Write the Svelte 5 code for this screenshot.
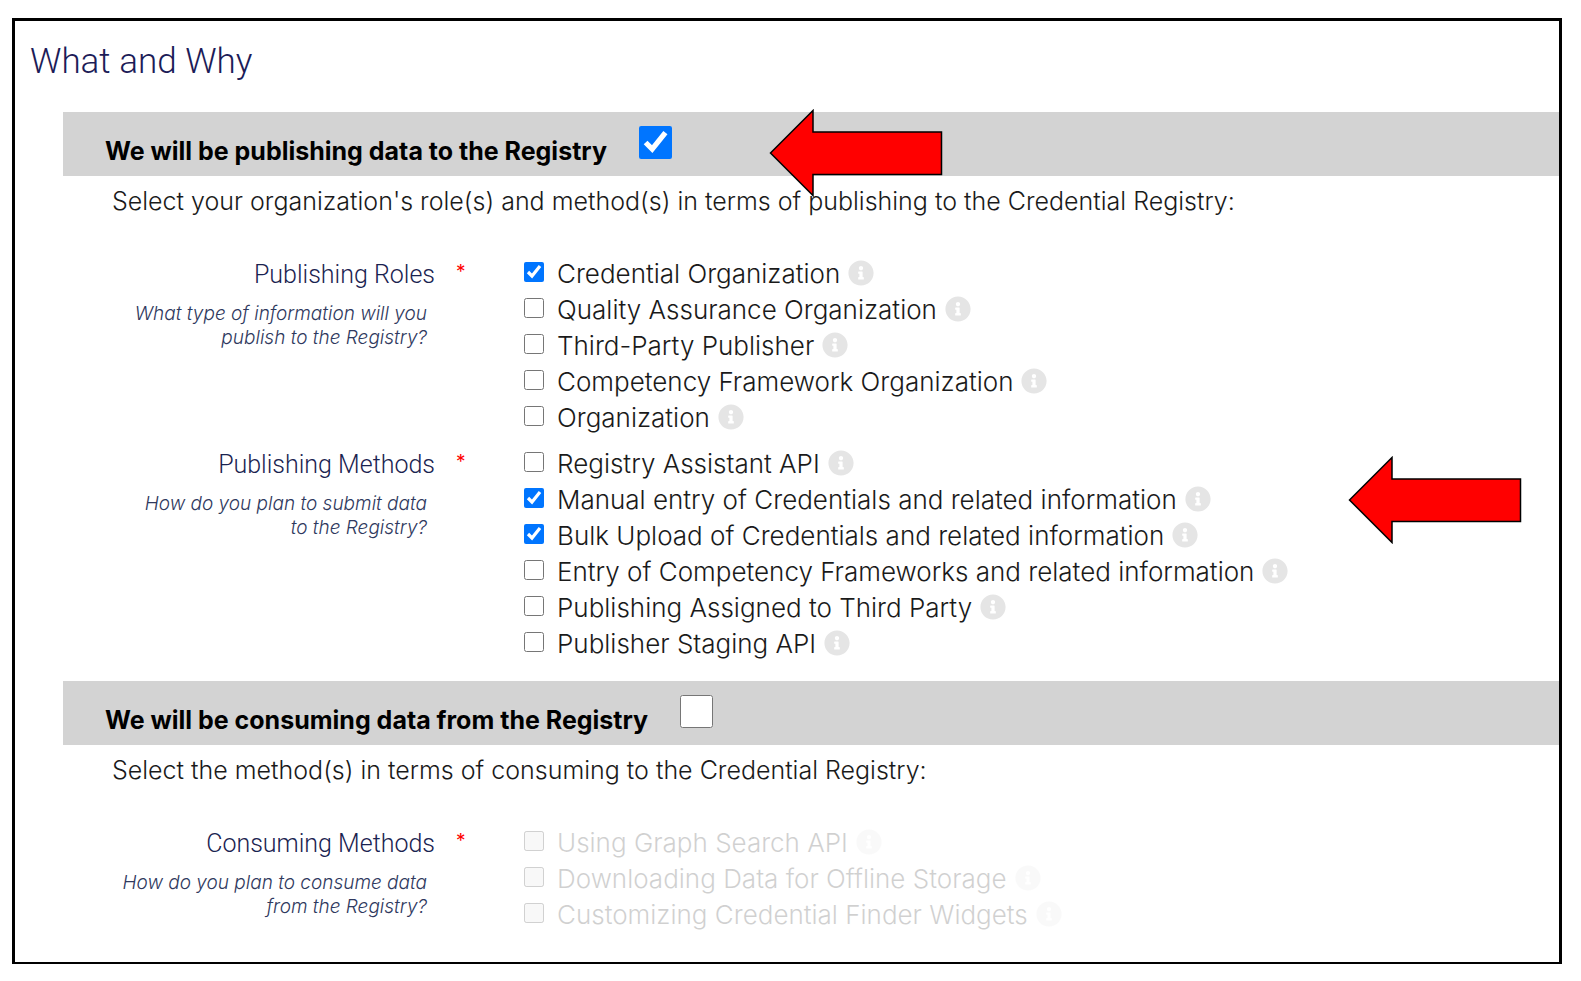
<script>
  let sections = $state([
    {
      id: 'publish',
      title: 'We will be publishing data to the Registry',
      enabled: true,
      intro:
        "Select your organization's role(s) and method(s) in terms of publishing to the Credential Registry:",
      pointer: true,
      groups: [
        {
          id: 'roles',
          label: 'Publishing Roles',
          hint: ['What type of information will you', 'publish to the Registry?'],
          options: [
            { text: 'Credential Organization', checked: true },
            { text: 'Quality Assurance Organization', checked: false },
            { text: 'Third-Party Publisher', checked: false },
            { text: 'Competency Framework Organization', checked: false },
            { text: 'Organization', checked: false }
          ]
        },
        {
          id: 'methods',
          label: 'Publishing Methods',
          hint: ['How do you plan to submit data', 'to the Registry?'],
          pointer: true,
          options: [
            { text: 'Registry Assistant API', checked: false },
            { text: 'Manual entry of Credentials and related information', checked: true },
            { text: 'Bulk Upload of Credentials and related information', checked: true },
            { text: 'Entry of Competency Frameworks and related information', checked: false },
            { text: 'Publishing Assigned to Third Party', checked: false },
            { text: 'Publisher Staging API', checked: false }
          ]
        }
      ]
    },
    {
      id: 'consume',
      title: 'We will be consuming data from the Registry',
      enabled: false,
      intro: 'Select the method(s) in terms of consuming to the Credential Registry:',
      groups: [
        {
          id: 'consuming',
          label: 'Consuming Methods',
          hint: ['How do you plan to consume data', 'from the Registry?'],
          options: [
            { text: 'Using Graph Search API', checked: false },
            { text: 'Downloading Data for Offline Storage', checked: false },
            { text: 'Customizing Credential Finder Widgets', checked: false }
          ]
        }
      ]
    }
  ]);
</script>

{#snippet arrow(place)}
  <svg class="arrow {place}" width="174" height="88" viewBox="0 0 174 88" aria-hidden="true">
    <path d="M1.5 44 44 1.5V23H172.500V65.500H44V86.500Z" fill="#f00" stroke="#000" stroke-width="1.500" />
  </svg>
{/snippet}

{#snippet info()}
  <svg class="info" viewBox="0 0 512 512" aria-hidden="true">
    <path
      fill="currentColor"
      d="M256 8C119 8 8 119.100 8 256c0 137 111 248 248 248s248-111 248-248C504 119.100 393 8 256 8zm0 110c23.200 0 42 18.800 42 42s-18.800 42-42 42-42-18.800-42-42 18.800-42 42-42zm56 254c0 6.600-5.400 12-12 12h-88c-6.600 0-12-5.400-12-12v-24c0-6.600 5.400-12 12-12h12v-64h-12c-6.600 0-12-5.400-12-12v-24c0-6.600 5.400-12 12-12h64c6.600 0 12 5.400 12 12v100h12c6.600 0 12 5.400 12 12v24z"
    />
  </svg>
{/snippet}

<main>
  <h1>What and Why</h1>
  {#each sections as section (section.id)}
    <section>
      <div class="bar">
        <label for={section.id}>{section.title}</label>
        <input id={section.id} type="checkbox" bind:checked={section.enabled} />
        {#if section.pointer}{@render arrow('on-bar')}{/if}
      </div>
      <p class="intro">{section.intro}</p>
      <div class="groups">
        {#each section.groups as group (group.id)}
          <div class="group" role="group" aria-labelledby="{group.id}-label">
            <div class="caption">
              <div class="name" id="{group.id}-label">{group.label}</div>
              <div class="hint">
                {#each group.hint as line}<span>{line}</span>{/each}
              </div>
            </div>
            <span class="required">*</span>
            <ul class:off={!section.enabled}>
              {#each group.options as option, i}
                <li>
                  <input
                    id="{group.id}-{i}"
                    type="checkbox"
                    bind:checked={option.checked}
                    disabled={!section.enabled}
                  />
                  <label for="{group.id}-{i}">{option.text}</label>
                  {@render info()}
                </li>
              {/each}
            </ul>
            {#if group.pointer}{@render arrow('on-group')}{/if}
          </div>
        {/each}
      </div>
    </section>
  {/each}
</main>

<style>
  :global(body) {
    background: #fff;
  }

  main {
    box-sizing: border-box;
    margin: 18px 19px 16px 12px;
    padding-bottom: 10px;
    border: 3px solid #000;
    border-bottom-width: 2px;
    font-family: Inter, sans-serif;
    font-size: 25px;
    line-height: 36px;
    color: #1a1a1a;
  }

  h1 {
    margin: 0;
    padding: 17px 16px 26px 15px;
    font: 300 35px/48px Roboto, sans-serif;
    color: #1c1c58;
  }

  section {
    margin-left: 48px;
  }

  .bar {
    position: relative;
    display: flex;
    box-sizing: border-box;
    height: 64px;
    padding: 14px 0 0 42px;
    gap: 32px;
    background: #d3d3d3;
  }

  .bar label {
    padding-top: 7px;
    font-weight: 700;
    color: #000;
  }

  .bar input {
    width: 33px;
    height: 33px;
    margin: 0;
  }

  .intro {
    margin: 0;
    padding: 7px 0 37px 49px;
    font-weight: 300;
  }

  .groups {
    display: flex;
    flex-direction: column;
    gap: 10px;
    padding-bottom: 19px;
  }

  .group {
    position: relative;
    display: flex;
  }

  .caption {
    width: 372px;
    text-align: right;
    color: #1a2350;
  }

  .name {
    font: 300 25px/38px Roboto, sans-serif;
  }

  .hint {
    padding: 8px 8px 0 0;
    font-size: 19px;
    line-height: 24px;
    font-style: italic;
    font-weight: 300;
    color: #2f395e;
  }

  .hint span {
    display: block;
  }

  .required {
    width: 68px;
    padding-left: 21px;
    font-size: 19px;
    line-height: 32px;
    color: #f00;
    box-sizing: border-box;
  }

  ul {
    margin: 0;
    padding: 0 0 0 21px;
    list-style: none;
    font-size: 26px;
    font-weight: 300;
  }

  li {
    display: flex;
    align-items: center;
    height: 36px;
  }

  li input {
    width: 20px;
    height: 20px;
    margin: 0 13px 4px 0;
  }

  .info {
    width: 26px;
    height: 26px;
    margin: 0 0 2px 8px;
    color: #e5e5e5;
  }

  .off label,
  .off .info {
    opacity: 0.2;
  }

  .arrow {
    position: absolute;
  }

  .on-bar {
    top: -3px;
    left: 706px;
  }

  .on-group {
    top: 10px;
    right: 37px;
  }
</style>
